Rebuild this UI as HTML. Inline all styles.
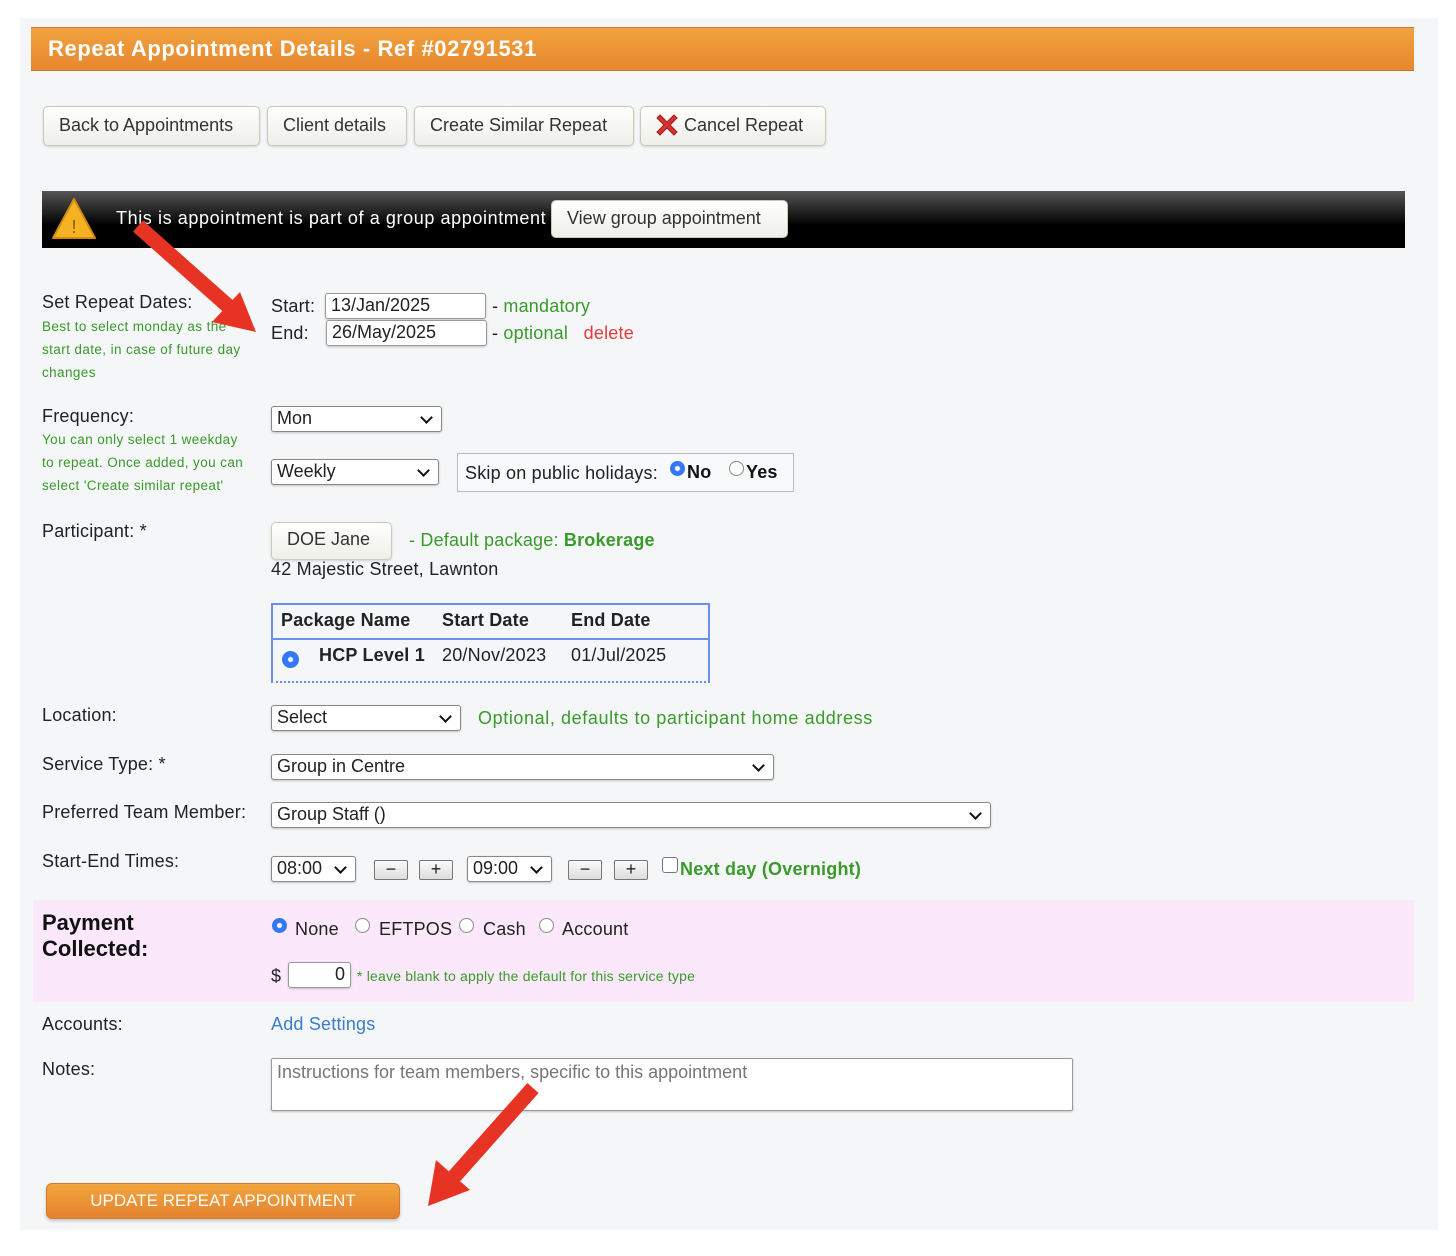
<!DOCTYPE html>
<html><head><meta charset="utf-8"><style>
*{box-sizing:border-box}
body{margin:0;width:1456px;height:1256px;background:#fff;font-family:"Liberation Sans",sans-serif;color:#222;position:relative;overflow:hidden}
.a{position:absolute;white-space:nowrap}
.panel{position:absolute;left:20px;top:18px;width:1418px;height:1212px;background:#f4f6f8}
.hdr{left:31px;top:27px;width:1383px;height:44px;background:linear-gradient(#f0a23e,#e8872f);border-top:1px solid #d07a2a;border-bottom:1px solid #c97328;color:#fff;font-weight:bold;font-size:22px;letter-spacing:0.6px;padding:8px 17px}
.btn{height:40px;border:1px solid #c9cbb8;border-radius:5px;background:linear-gradient(#fff,#eeeeea);font-size:18px;color:#333;padding:8px 15px;box-shadow:0 1px 2px rgba(0,0,0,.15)}
.bar{left:42px;top:191px;width:1363px;height:57px;background:linear-gradient(#555,#000 60%)}
.lbl{font-size:18px;color:#222;letter-spacing:0.2px}
.g{color:#3a9a2a}
.small{font-size:13.5px;color:#3a9a2a;line-height:23px;letter-spacing:0.4px}
.inp{background:#fff;border:1px solid #999;border-radius:3px;height:26px;font-size:18px;padding:1px 5px;box-shadow:0 1px 2px rgba(0,0,0,.2)}
.sel{background:#fff;border:1px solid #888;border-radius:3px;height:26px;font-size:18px;padding:1px 5px;box-shadow:0 1px 2px rgba(0,0,0,.2)}
.sel:after{content:"";position:absolute;right:10px;top:6px;width:7px;height:7px;border-right:2px solid #111;border-bottom:2px solid #111;transform:rotate(45deg)}
.rad{width:15px;height:15px;border-radius:50%;border:1px solid #888;background:#fff}
.rad.on{border:1px solid #3478f6;background:radial-gradient(#fff 0 2px,#3478f6 3px)}
.pm{width:34px;height:20px;border:1px solid #777;border-radius:2px;background:linear-gradient(#fafafa,#ddd);font-size:18px;text-align:center;line-height:17px}
</style></head><body>
<div class="panel"></div>
<div class="a hdr">Repeat Appointment Details - Ref #02791531</div>
<div class="a btn" style="left:43px;top:106px;width:217px">Back to Appointments</div>
<div class="a btn" style="left:267px;top:106px;width:140px">Client details</div>
<div class="a btn" style="left:414px;top:106px;width:220px">Create Similar Repeat</div>
<div class="a btn" style="left:640px;top:106px;width:186px;padding-left:43px">Cancel Repeat</div>
<svg class="a" style="left:654px;top:112px" width="26" height="26" viewBox="0 0 26 26"><path d="M3 6 L6 3 L13 10 L20 3 L23 6 L16 13 L23 20 L20 23 L13 16 L6 23 L3 20 L10 13Z" fill="#d8322e" stroke="#a01d1a" stroke-width="1"/></svg>
<div class="a bar"></div>
<svg class="a" style="left:50px;top:196px" width="48" height="46" viewBox="0 0 48 46"><path d="M24 3 L45 42 L3 42Z" fill="#f5b324" stroke="#d48a10" stroke-width="2" stroke-linejoin="round"/><text x="24" y="37" font-size="18" fill="#8a5a00" text-anchor="middle" font-family="Liberation Sans">!</text></svg>
<div class="a" style="left:116px;top:208px;color:#fff;font-size:18px;letter-spacing:0.6px">This is appointment is part of a group appointment</div>
<div class="a btn" style="left:551px;top:200px;width:237px;height:38px;font-size:18px;padding:7px 15px">View group appointment</div>

<div class="a lbl" style="left:42px;top:292px">Set Repeat Dates:</div>
<div class="a small" style="left:42px;top:315px">Best to select monday as the<br>start date, in case of future day<br>changes</div>
<div class="a lbl" style="left:271px;top:296px">Start:</div>
<div class="a lbl" style="left:271px;top:323px">End:</div>
<div class="a inp" style="left:325px;top:293px;width:161px">13/Jan/2025</div>
<div class="a inp" style="left:326px;top:320px;width:161px">26/May/2025</div>
<div class="a lbl" style="left:492px;top:296px">- <span class="g">mandatory</span></div>
<div class="a lbl" style="left:492px;top:323px">- <span class="g">optional</span> &nbsp; <span style="color:#e43a3a">delete</span></div>

<div class="a lbl" style="left:42px;top:406px">Frequency:</div>
<div class="a small" style="left:42px;top:428px">You can only select 1 weekday<br>to repeat. Once added, you can<br>select 'Create similar repeat'</div>
<div class="a sel" style="left:271px;top:406px;width:171px">Mon</div>
<div class="a sel" style="left:271px;top:459px;width:168px">Weekly</div>
<div class="a" style="left:457px;top:453px;width:337px;height:39px;border:1px solid #bbb;background:#f8f9fa"></div>
<div class="a lbl" style="left:465px;top:463px">Skip on public holidays:</div>
<div class="a rad on" style="left:670px;top:461px"></div>
<div class="a lbl" style="left:687px;top:462px;font-weight:bold;color:#111">No</div>
<div class="a rad" style="left:729px;top:461px"></div>
<div class="a lbl" style="left:746px;top:462px;font-weight:bold;color:#111">Yes</div>

<div class="a lbl" style="left:42px;top:521px">Participant: *</div>
<div class="a btn" style="left:271px;top:522px;width:121px;height:38px;font-size:18px;padding:6px 15px">DOE Jane</div>
<div class="a lbl g" style="left:409px;top:530px">- Default package: <b>Brokerage</b></div>
<div class="a lbl" style="left:271px;top:559px">42 Majestic Street, Lawnton</div>
<div class="a" style="left:271px;top:603px;width:439px;height:80px;border:2px solid #6a8ff0;border-bottom-style:dotted"></div>
<div class="a" style="left:273px;top:638px;width:435px;border-top:2px solid #6a8ff0"></div>
<div class="a lbl" style="left:281px;top:610px;font-weight:bold">Package Name</div>
<div class="a lbl" style="left:442px;top:610px;font-weight:bold">Start Date</div>
<div class="a lbl" style="left:571px;top:610px;font-weight:bold">End Date</div>
<div class="a rad on" style="left:282px;top:651px;width:17px;height:17px"></div>
<div class="a lbl" style="left:319px;top:645px;font-weight:bold">HCP Level 1</div>
<div class="a lbl" style="left:442px;top:645px">20/Nov/2023</div>
<div class="a lbl" style="left:571px;top:645px">01/Jul/2025</div>

<div class="a lbl" style="left:42px;top:705px">Location:</div>
<div class="a sel" style="left:271px;top:705px;width:190px">Select</div>
<div class="a lbl g" style="left:478px;top:708px;letter-spacing:0.6px">Optional, defaults to participant home address</div>
<div class="a lbl" style="left:42px;top:754px">Service Type: *</div>
<div class="a sel" style="left:271px;top:754px;width:503px">Group in Centre</div>
<div class="a lbl" style="left:42px;top:802px">Preferred Team Member:</div>
<div class="a sel" style="left:271px;top:802px;width:720px">Group Staff ()</div>
<div class="a lbl" style="left:42px;top:851px">Start-End Times:</div>
<div class="a sel" style="left:271px;top:856px;width:85px">08:00</div>
<div class="a pm" style="left:374px;top:860px">−</div>
<div class="a pm" style="left:419px;top:860px">+</div>
<div class="a sel" style="left:467px;top:856px;width:85px">09:00</div>
<div class="a pm" style="left:568px;top:860px">−</div>
<div class="a pm" style="left:614px;top:860px">+</div>
<div class="a" style="left:662px;top:857px;width:16px;height:16px;border:1px solid #777;border-radius:3px;background:#fff"></div>
<div class="a lbl g" style="left:680px;top:859px;font-weight:bold">Next day (Overnight)</div>

<div class="a" style="left:33px;top:900px;width:1381px;height:102px;background:#fbe8fb"></div>
<div class="a" style="left:42px;top:910px;font-size:22px;font-weight:bold;line-height:26px;color:#111">Payment<br>Collected:</div>
<div class="a rad on" style="left:272px;top:918px"></div>
<div class="a lbl" style="left:295px;top:919px">None</div>
<div class="a rad" style="left:355px;top:918px"></div>
<div class="a lbl" style="left:379px;top:919px">EFTPOS</div>
<div class="a rad" style="left:459px;top:918px"></div>
<div class="a lbl" style="left:483px;top:919px">Cash</div>
<div class="a rad" style="left:539px;top:918px"></div>
<div class="a lbl" style="left:562px;top:919px">Account</div>
<div class="a lbl" style="left:271px;top:966px">$</div>
<div class="a inp" style="left:288px;top:962px;width:63px;text-align:right">0</div>
<div class="a" style="left:357px;top:968px;font-size:14px;color:#3a9a2a;letter-spacing:0.2px">* leave blank to apply the default for this service type</div>

<div class="a lbl" style="left:42px;top:1014px">Accounts:</div>
<div class="a lbl" style="left:271px;top:1014px;color:#3a7ec8">Add Settings</div>
<div class="a lbl" style="left:42px;top:1059px">Notes:</div>
<div class="a" style="left:271px;top:1058px;width:802px;height:53px;background:#fff;border:1px solid #999;border-radius:2px;font-size:18px;color:#777;padding:3px 5px;box-shadow:0 1px 2px rgba(0,0,0,.2)">Instructions for team members, specific to this appointment</div>

<div class="a" style="left:46px;top:1183px;width:354px;height:36px;border-radius:6px;background:linear-gradient(#f2a53e,#e5822f);border:1px solid #d47a2c;color:#fff;font-size:17px;text-align:center;line-height:34px;box-shadow:0 2px 3px rgba(0,0,0,.2)">UPDATE REPEAT APPOINTMENT</div>

<svg class="a" style="left:0;top:0" width="1456" height="1256">
<line x1="138" y1="226" x2="228" y2="306" stroke="#e63323" stroke-width="15"/>
<polygon points="256,332 212,322 240,292" fill="#e63323"/>
<line x1="533" y1="1088" x2="453" y2="1178" stroke="#e63323" stroke-width="15"/>
<polygon points="428,1206 436,1160 470,1190" fill="#e63323"/>
</svg>
</body></html>
